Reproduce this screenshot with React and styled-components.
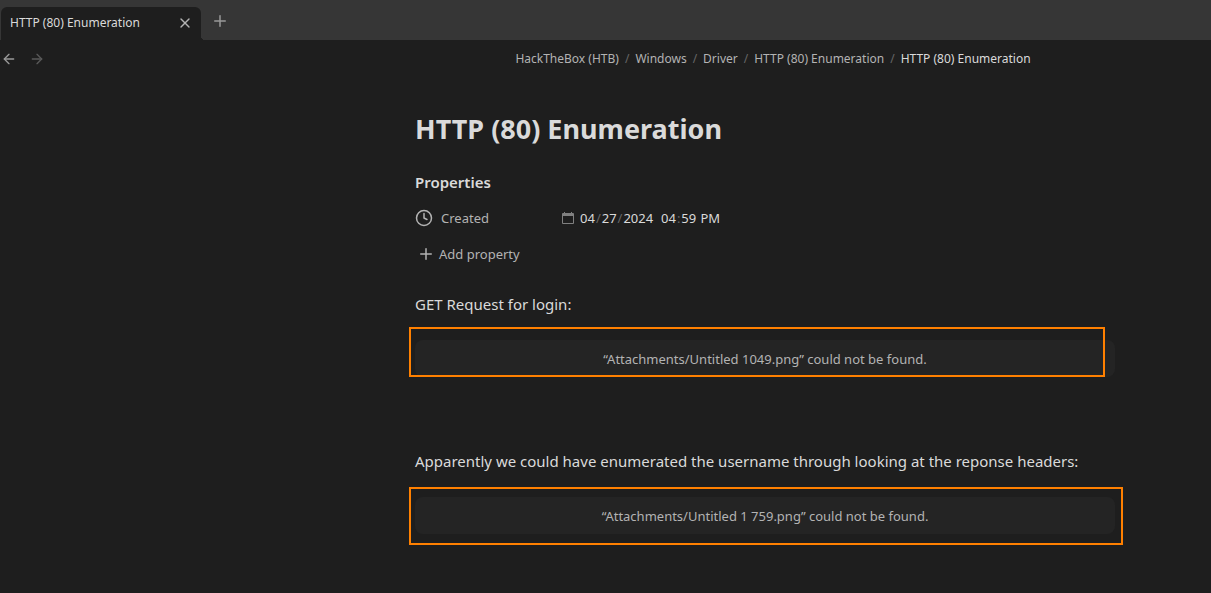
import React, { useState } from "react";
import styled, { createGlobalStyle } from "styled-components";
import { X, Plus, ArrowLeft, ArrowRight, Clock } from "lucide-react";

const GlobalStyle = createGlobalStyle`
  * { box-sizing: border-box; }
  body {
    margin: 0;
    background: #1e1e1e;
    color: #dadada;
    font-family: "Segoe UI", "Noto Sans", "Open Sans", sans-serif;
    font-size: 15px;
    color-scheme: dark;
  }
  button, input { font: inherit; color: inherit; }
`;

const Page = styled.div`
  display: flex;
  flex-direction: column;
  min-height: 100vh;
`;

const TabBar = styled.header`
  display: flex;
  align-items: flex-end;
  height: 40px;
  padding-left: 1px;
  background: #363636;
`;

const Tab = styled.div`
  position: relative;
  display: flex;
  align-items: center;
  justify-content: space-between;
  width: 200px;
  height: 33px;
  padding: 0 8px 2px 9px;
  border-radius: 6px 6px 0 0;
  background: #1e1e1e;
  font-size: 12px;

  &::after {
    content: "";
    position: absolute;
    left: 100%;
    bottom: 0;
    width: 4px;
    height: 4px;
    background: radial-gradient(circle at 100% 0, transparent 4px, #1e1e1e 4px);
  }
`;

const IconButton = styled.button`
  display: flex;
  align-items: center;
  justify-content: center;
  width: ${(p) => p.$size || 16}px;
  height: ${(p) => p.$size || 16}px;
  padding: 0;
  border: 0;
  background: none;
  color: ${(p) => p.$color || "#b3b3b3"};
`;

const NewTab = styled.div`
  display: flex;
  align-items: center;
  height: 38px;
  padding-left: 10px;
`;

const ViewHeader = styled.div`
  display: grid;
  grid-template-columns: 335fr 876fr;
  align-items: center;
  height: 37px;
`;

const History = styled.div`
  display: flex;
  gap: 12px;
  padding-left: 1px;
`;

const Breadcrumbs = styled.nav`
  display: flex;
  justify-content: center;
  font-size: 12px;
  line-height: 20px;
  white-space: nowrap;
`;

const Crumb = styled.a`
  color: ${(p) => (p.$current ? "#dadada" : "#b3b3b3")};
  text-decoration: none;
`;

const Slash = styled.span`
  padding: 0 6px;
  color: #666;
`;

const Content = styled.main`
  display: grid;
  grid-template-columns: minmax(16px, 415fr) minmax(0, 700px) minmax(16px, 96fr);
`;

const Note = styled.article`
  grid-column: 2;
  padding-top: 32px;
`;

const Title = styled.h1`
  margin: 0 0 23px;
  font-size: 27px;
  line-height: 40px;
  font-weight: 700;
`;

const SectionTitle = styled.h2`
  margin: 0 0 10px;
  font-size: 15px;
  line-height: 20px;
  font-weight: 600;
`;

const PropertyRow = styled.div`
  display: flex;
  align-items: center;
  height: 32px;
  font-size: 13px;
`;

const PropertyName = styled.label`
  display: flex;
  align-items: center;
  gap: 8px;
  width: 147px;
  color: #b3b3b3;
`;

const DateValue = styled.div`
  display: flex;
  align-items: center;
`;

const DateInput = styled.input`
  width: ${(p) => p.$width}px;
  margin: 0;
  padding: 0 0 0 5px;
  border: 0;
  outline: 0;
  background: transparent;
  line-height: 20px;

  &::-webkit-calendar-picker-indicator { display: none; }
  &::-webkit-datetime-edit { padding: 0; }
  &::-webkit-datetime-edit-text { color: #666; }
`;

const AddProperty = styled.button`
  display: flex;
  align-items: center;
  gap: 4px;
  height: 32px;
  margin: 4px 0 22px;
  padding: 0 2px;
  border: 0;
  background: none;
  color: #b3b3b3;
  font-size: 13px;
`;

const Paragraph = styled.p`
  margin: 0;
  font-size: 15px;
  line-height: 24px;
`;

const Embed = styled.div`
  position: relative;
  margin: ${(p) => (p.$last ? "24px 0 0" : "24px 0 72px")};
  padding: 9px 16px 7px;
  border-radius: 8px;
  background: #242424;
  color: #b3b3b3;
  font-size: 13px;
  line-height: 21px;
  text-align: center;
`;

const Highlight = styled.div`
  position: absolute;
  top: ${(p) => p.$top}px;
  right: ${(p) => p.$right}px;
  bottom: ${(p) => p.$bottom}px;
  left: -6px;
  border: 2px solid #ff8000;
  pointer-events: none;
`;

const CalendarIcon = () => (
  <svg width="12" height="12" viewBox="0 0 12 12" fill="none" stroke="#808080" aria-hidden="true">
    <path d="M.5 1.5h11v10H.5z" />
    <path d="M0 2.5h12M0 3.5h12" />
    <path d="M2.5 0v2M9.5 0v2" />
  </svg>
);

const trail = ["HackTheBox (HTB)", "Windows", "Driver", "HTTP (80) Enumeration"];

export default function App() {
  const [date, setDate] = useState("2024-04-27");
  const [time, setTime] = useState("16:59");

  return (
    <Page>
      <GlobalStyle />
      <TabBar>
        <Tab>
          <span>HTTP (80) Enumeration</span>
          <IconButton aria-label="Close tab"><X size={16} strokeWidth={2} /></IconButton>
        </Tab>
        <NewTab>
          <IconButton aria-label="New tab" $size={18} $color="#999"><Plus size={18} strokeWidth={2} /></IconButton>
        </NewTab>
      </TabBar>
      <ViewHeader>
        <History>
          <IconButton aria-label="Back" $color="#999"><ArrowLeft size={16} /></IconButton>
          <IconButton aria-label="Forward" $color="#595959"><ArrowRight size={16} /></IconButton>
        </History>
        <Breadcrumbs aria-label="Breadcrumb">
          {trail.map((name) => (
            <React.Fragment key={name}>
              <Crumb href="#">{name}</Crumb>
              <Slash>/</Slash>
            </React.Fragment>
          ))}
          <Crumb href="#" $current aria-current="page">HTTP (80) Enumeration</Crumb>
        </Breadcrumbs>
      </ViewHeader>
      <Content>
        <Note>
          <Title>HTTP (80) Enumeration</Title>
          <SectionTitle>Properties</SectionTitle>
          <PropertyRow>
            <PropertyName htmlFor="created"><Clock size={18} strokeWidth={2} />Created</PropertyName>
            <DateValue>
              <CalendarIcon />
              <DateInput id="created" type="date" $width={81} value={date} onChange={(e) => setDate(e.target.value)} />
              <DateInput aria-label="Created time" type="time" $width={80} value={time} onChange={(e) => setTime(e.target.value)} />
            </DateValue>
          </PropertyRow>
          <AddProperty><Plus size={18} />Add property</AddProperty>
          <Paragraph>GET Request for login:</Paragraph>
          <Embed>
            “Attachments/Untitled 1049.png” could not be found.
            <Highlight $top={-13} $right={10} $bottom={0} />
          </Embed>
          <Paragraph>Apparently we could have enumerated the username through looking at the reponse headers:</Paragraph>
          <Embed $last>
            “Attachments/Untitled 1 759.png” could not be found.
            <Highlight $top={-10} $right={-8} $bottom={-11} />
          </Embed>
        </Note>
      </Content>
    </Page>
  );
}
